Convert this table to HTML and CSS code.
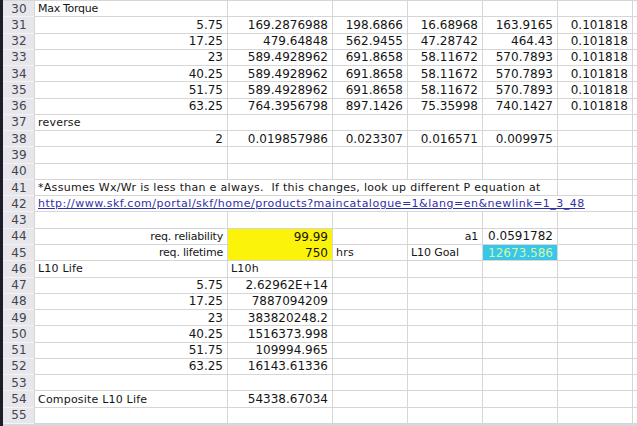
FILE: index.html
```html
<!DOCTYPE html>
<html>
<head>
<meta charset="utf-8">
<link rel="stylesheet" href="styles.css">
</head>
<body>
<div class="window">
  <div class="strip"></div>
  <div class="sheet">
    <div class="rh">30</div><div class="c t narrow">Max Torque</div><div class="c"></div><div class="c"></div><div class="c"></div><div class="c"></div><div class="c"></div><div class="c"></div>
    <div class="rh">31</div><div class="c n">5.75</div><div class="c n">169.2876988</div><div class="c n">198.6866</div><div class="c n">16.68968</div><div class="c n">163.9165</div><div class="c n">0.101818</div><div class="c"></div>
    <div class="rh">32</div><div class="c n">17.25</div><div class="c n">479.64848</div><div class="c n">562.9455</div><div class="c n">47.28742</div><div class="c n">464.43</div><div class="c n">0.101818</div><div class="c"></div>
    <div class="rh">33</div><div class="c n">23</div><div class="c n">589.4928962</div><div class="c n">691.8658</div><div class="c n">58.11672</div><div class="c n">570.7893</div><div class="c n">0.101818</div><div class="c"></div>
    <div class="rh">34</div><div class="c n">40.25</div><div class="c n">589.4928962</div><div class="c n">691.8658</div><div class="c n">58.11672</div><div class="c n">570.7893</div><div class="c n">0.101818</div><div class="c"></div>
    <div class="rh">35</div><div class="c n">51.75</div><div class="c n">589.4928962</div><div class="c n">691.8658</div><div class="c n">58.11672</div><div class="c n">570.7893</div><div class="c n">0.101818</div><div class="c"></div>
    <div class="rh">36</div><div class="c n">63.25</div><div class="c n">764.3956798</div><div class="c n">897.1426</div><div class="c n">75.35998</div><div class="c n">740.1427</div><div class="c n">0.101818</div><div class="c"></div>
    <div class="rh">37</div><div class="c t">reverse</div><div class="c"></div><div class="c"></div><div class="c"></div><div class="c"></div><div class="c"></div><div class="c"></div>
    <div class="rh">38</div><div class="c n">2</div><div class="c n">0.019857986</div><div class="c n">0.023307</div><div class="c n">0.016571</div><div class="c n">0.009975</div><div class="c"></div><div class="c"></div>
    <div class="rh">39</div><div class="c"></div><div class="c"></div><div class="c"></div><div class="c"></div><div class="c"></div><div class="c"></div><div class="c"></div>
    <div class="rh">40</div><div class="c"></div><div class="c"></div><div class="c"></div><div class="c"></div><div class="c"></div><div class="c"></div><div class="c"></div>
    <div class="rh">41</div><div class="c t wide span5">*Assumes Wx/Wr is less than e always.&nbsp; If this changes, look up different P equation at</div><div class="c"></div><div class="c"></div>
    <div class="rh">42</div><div class="c t span6"><span class="lnk">http://www.skf.com/portal/skf/home/products?maincatalogue=1&amp;lang=en&amp;newlink=1_3_48</span></div><div class="c"></div>
    <div class="rh">43</div><div class="c"></div><div class="c"></div><div class="c"></div><div class="c"></div><div class="c"></div><div class="c"></div><div class="c"></div>
    <div class="rh">44</div><div class="c r">req. reliability</div><div class="c n yel yel-top">99.99</div><div class="c"></div><div class="c r">a1</div><div class="c n">0.0591782</div><div class="c"></div><div class="c"></div>
    <div class="rh">45</div><div class="c r">req. lifetime</div><div class="c n yel">750</div><div class="c t">hrs</div><div class="c t tight">L10 Goal</div><div class="c n cyan">12673.586</div><div class="c"></div><div class="c"></div>
    <div class="rh">46</div><div class="c t">L10 Life</div><div class="c t">L10h</div><div class="c"></div><div class="c"></div><div class="c"></div><div class="c"></div><div class="c"></div>
    <div class="rh">47</div><div class="c n">5.75</div><div class="c n">2.62962E+14</div><div class="c"></div><div class="c"></div><div class="c"></div><div class="c"></div><div class="c"></div>
    <div class="rh">48</div><div class="c n">17.25</div><div class="c n">7887094209</div><div class="c"></div><div class="c"></div><div class="c"></div><div class="c"></div><div class="c"></div>
    <div class="rh">49</div><div class="c n">23</div><div class="c n">383820248.2</div><div class="c"></div><div class="c"></div><div class="c"></div><div class="c"></div><div class="c"></div>
    <div class="rh">50</div><div class="c n">40.25</div><div class="c n">1516373.998</div><div class="c"></div><div class="c"></div><div class="c"></div><div class="c"></div><div class="c"></div>
    <div class="rh">51</div><div class="c n">51.75</div><div class="c n">109994.965</div><div class="c"></div><div class="c"></div><div class="c"></div><div class="c"></div><div class="c"></div>
    <div class="rh">52</div><div class="c n">63.25</div><div class="c n">16143.61336</div><div class="c"></div><div class="c"></div><div class="c"></div><div class="c"></div><div class="c"></div>
    <div class="rh">53</div><div class="c"></div><div class="c"></div><div class="c"></div><div class="c"></div><div class="c"></div><div class="c"></div><div class="c"></div>
    <div class="rh">54</div><div class="c t">Composite L10 Life</div><div class="c n">54338.67034</div><div class="c"></div><div class="c"></div><div class="c"></div><div class="c"></div><div class="c"></div>
    <div class="rh">55</div><div class="c"></div><div class="c"></div><div class="c"></div><div class="c"></div><div class="c"></div><div class="c"></div><div class="c"></div>
  </div>
</div>
</body>
</html>
```
FILE: styles.css
```css
html, body {
  margin: 0;
  padding: 0;
  background: #d9d9dc;
}
.window {
  display: flex;
  width: 637px;
  height: 426px;
  overflow: hidden;
}
.strip {
  width: 3px;
  flex: none;
  background: #1d1e2a;
}
.sheet {
  flex: 1;
  display: grid;
  grid-template-columns: 31px 192px 104px 74px 74px 74px 74px 1fr;
  grid-auto-rows: 15.28px;
  gap: 1px;
  padding-top: 1px;
  padding-bottom: 1px;
  align-content: start;
  background: #d6d6d6;
  font-family: "DejaVu Sans", Verdana, sans-serif;
  color: #151515;
  height: max-content;
}
.rh {
  background: #e6e6eb;
  box-shadow: 0 1px 0 #f3f3f6;
  color: #44444f;
  font-size: 12px;
  display: flex;
  align-items: center;
  justify-content: center;
  padding-left: 1px;
}
.c {
  background: #ffffff;
  display: flex;
  align-items: center;
  white-space: nowrap;
  overflow: visible;
  min-width: 0;
}
.n {
  justify-content: flex-end;
  font-size: 12px;
  padding-right: 4px;
}
.t {
  font-size: 11px;
  letter-spacing: 0.2px;
  padding-left: 3px;
}
.wide {
  letter-spacing: 0.3px;
}
.tight {
  letter-spacing: -0.1px;
}
.narrow {
  letter-spacing: -0.3px;
}
.r {
  justify-content: flex-end;
  font-size: 11px;
  letter-spacing: -0.2px;
  padding-right: 4px;
}
.span5 {
  grid-column: span 5;
}
.span6 {
  grid-column: span 6;
}
.lnk {
  color: #2f2fa8;
  text-decoration: underline;
  letter-spacing: 0.5px;
}
.yel {
  background: #fbf30a;
}
.yel-top {
  margin-bottom: -1px;
}
.cyan {
  background: #38c6ea;
  color: #d2f7a0;
}
```
